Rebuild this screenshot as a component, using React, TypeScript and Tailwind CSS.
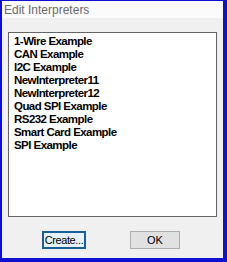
export default function App() {
  const items = [
    "1-Wire Example",
    "CAN Example",
    "I2C Example",
    "NewInterpreter11",
    "NewInterpreter12",
    "Quad SPI Example",
    "RS232 Example",
    "Smart Card Example",
    "SPI Example",
  ];

  return (
    <div className="w-[227px] h-[262px] flex flex-col bg-[#f0f0f0] border-t border-l-2 border-r-4 border-b-4 border-[#1010d0] font-['Liberation_Sans',Arial,sans-serif]">
      <div className="h-[17px] shrink-0 bg-[#fbfbfb] pl-[2px] text-[12px] leading-[18px] text-[#6b6b6b]">
        Edit Interpreters
      </div>
      <div className="flex-1 flex flex-col px-[6px] pt-[14px]">
        <div className="h-[185px] bg-white border border-[#646464] pl-[5px] pt-[2px]">
          {items.map((name) => (
            <div
              key={name}
              className="h-[13px] text-[11.5px] leading-[13px] font-bold tracking-[-0.55px] text-black whitespace-nowrap"
            >
              {name}
            </div>
          ))}
        </div>
        <div className="flex mt-[14px]">
          <button className="ml-[34px] w-[44px] h-[18px] bg-[#e5f1fb] border-2 border-[#1a5f9a] text-[11px] tracking-[-0.4px] leading-none text-black whitespace-nowrap">
            Create...
          </button>
          <button className="ml-[44px] w-[50px] h-[18px] bg-[#e1e1e1] border border-[#adadad] text-[11px] leading-none text-black">
            OK
          </button>
        </div>
      </div>
    </div>
  );
}
